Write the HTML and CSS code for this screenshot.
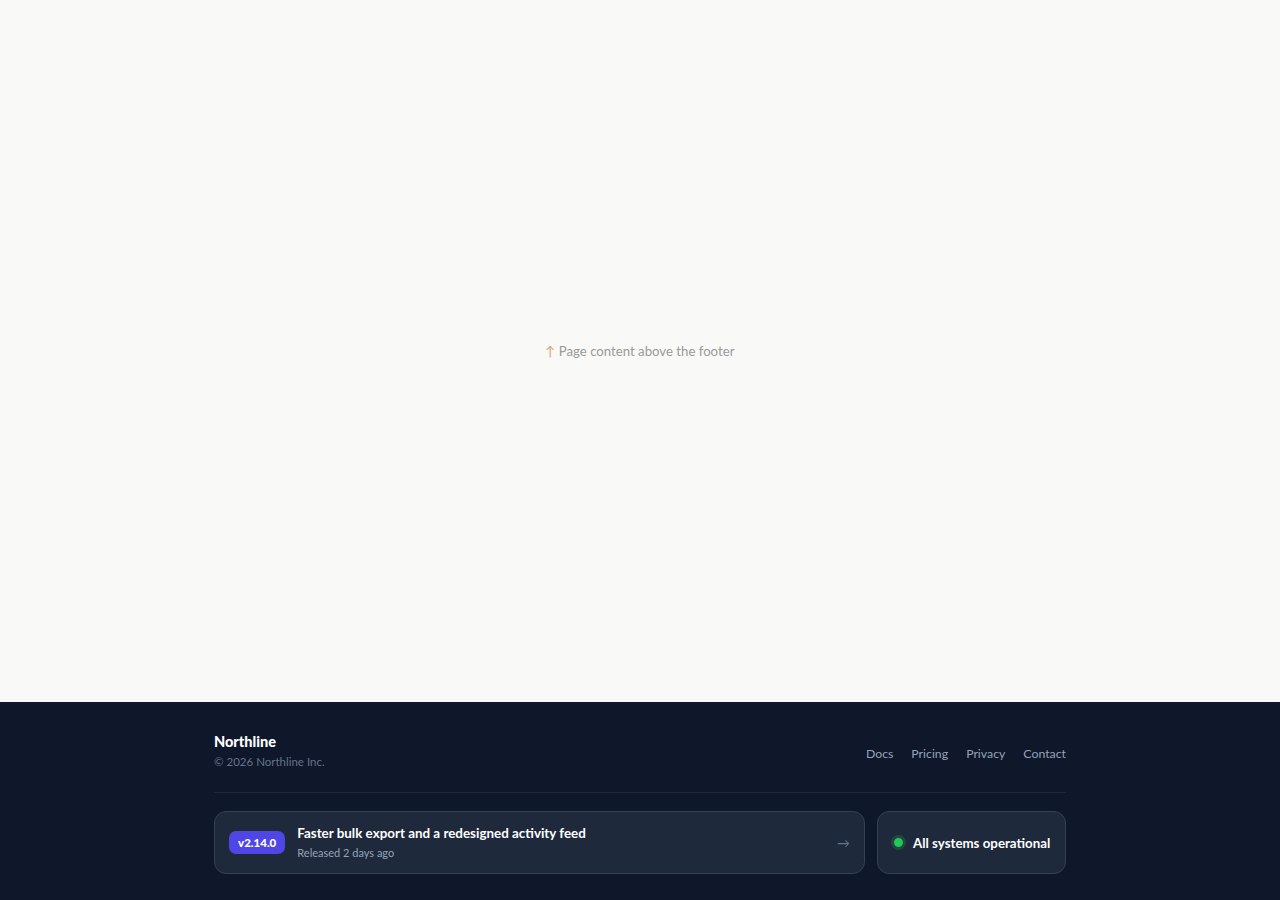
FILE: index.html
```html
<!DOCTYPE html>
<html lang="en">
<head>
<meta charset="utf-8">
<title>Northline</title>
<link rel="stylesheet" href="styles.css">
</head>
<body>
<main class="page">
  <p class="placeholder"><span class="up">↑</span> Page content above the footer</p>
</main>
<footer class="footer">
  <div class="footer-inner">
    <div class="top-row">
      <div class="brand">
        <div class="brand-name">Northline</div>
        <div class="copyright">© 2026 Northline Inc.</div>
      </div>
      <nav class="links">
        <a href="#">Docs</a>
        <a href="#">Pricing</a>
        <a href="#">Privacy</a>
        <a href="#">Contact</a>
      </nav>
    </div>
    <div class="cards">
      <a class="card release" href="#">
        <span class="badge">v2.14.0</span>
        <span class="release-text">
          <span class="release-title">Faster bulk export and a redesigned activity feed</span>
          <span class="release-sub">Released 2 days ago</span>
        </span>
        <span class="arrow">→</span>
      </a>
      <div class="card status">
        <span class="dot"></span>
        <span class="status-text">All systems operational</span>
      </div>
    </div>
  </div>
</footer>
</body>
</html>
```
FILE: styles.css
```css
* { box-sizing: border-box; }
html, body { margin: 0; padding: 0; }
body {
  font-family: Lato, "Open Sans", sans-serif;
  background: #f9f9f7;
  min-height: 100vh;
  display: flex;
  flex-direction: column;
}
.page {
  flex: 1;
  display: flex;
  align-items: center;
  justify-content: center;
  height: 702px;
}
.placeholder {
  margin: 0;
  font-size: 13.2px;
  color: #9a9a9a;
}
.up { color: #e0a070; }
.footer {
  background: #0f172a;
  height: 198px;
}
.footer-inner {
  width: 852px;
  margin: 0 auto;
  padding-top: 30px;
}
.top-row {
  display: flex;
  justify-content: space-between;
  align-items: center;
  padding-bottom: 21px;
  border-bottom: 1px solid #1e293b;
}
.brand-name {
  color: #ffffff;
  font-weight: 900;
  font-size: 14.5px;
  line-height: 20px;
}
.copyright {
  color: #64748b;
  font-size: 11.5px;
  line-height: 18px;
  margin-top: 1px;
}
.links {
  display: flex;
  gap: 18px;
  margin-top: 3px;
}
.links a {
  color: #94a3b8;
  font-size: 12.3px;
  text-decoration: none;
}
.cards {
  display: flex;
  gap: 12px;
  margin-top: 18px;
}
.card {
  background: #1e293b;
  border: 1px solid #334155;
  border-radius: 12px;
  height: 63px;
  display: flex;
  align-items: center;
  text-decoration: none;
}
.release {
  flex: 1;
  padding: 0 14px 0 14px;
}
.badge {
  background: #4f46e5;
  color: #ffffff;
  font-weight: 900;
  font-size: 11.5px;
  border-radius: 7px;
  padding: 3px 9px;
  line-height: 17px;
}
.release-text {
  display: flex;
  flex-direction: column;
  margin-left: 12px;
  flex: 1;
}
.release-title {
  color: #ffffff;
  font-weight: 700;
  font-size: 13.4px;
  line-height: 18px;
}
.release-sub {
  color: #94a3b8;
  font-size: 11px;
  line-height: 16px;
  margin-top: 3px;
}
.arrow {
  color: #64748b;
  font-size: 13px;
}
.status {
  width: 189px;
  padding: 0 13px;
}
.dot {
  width: 15px;
  height: 15px;
  border-radius: 50%;
  background: #22c55e;
  border: 3px solid #1f4a3b;
  box-sizing: border-box;
  margin-right: 7px;
  flex-shrink: 0;
}
.status-text {
  color: #ffffff;
  font-weight: 700;
  font-size: 13.3px;
  white-space: nowrap;
}
```
